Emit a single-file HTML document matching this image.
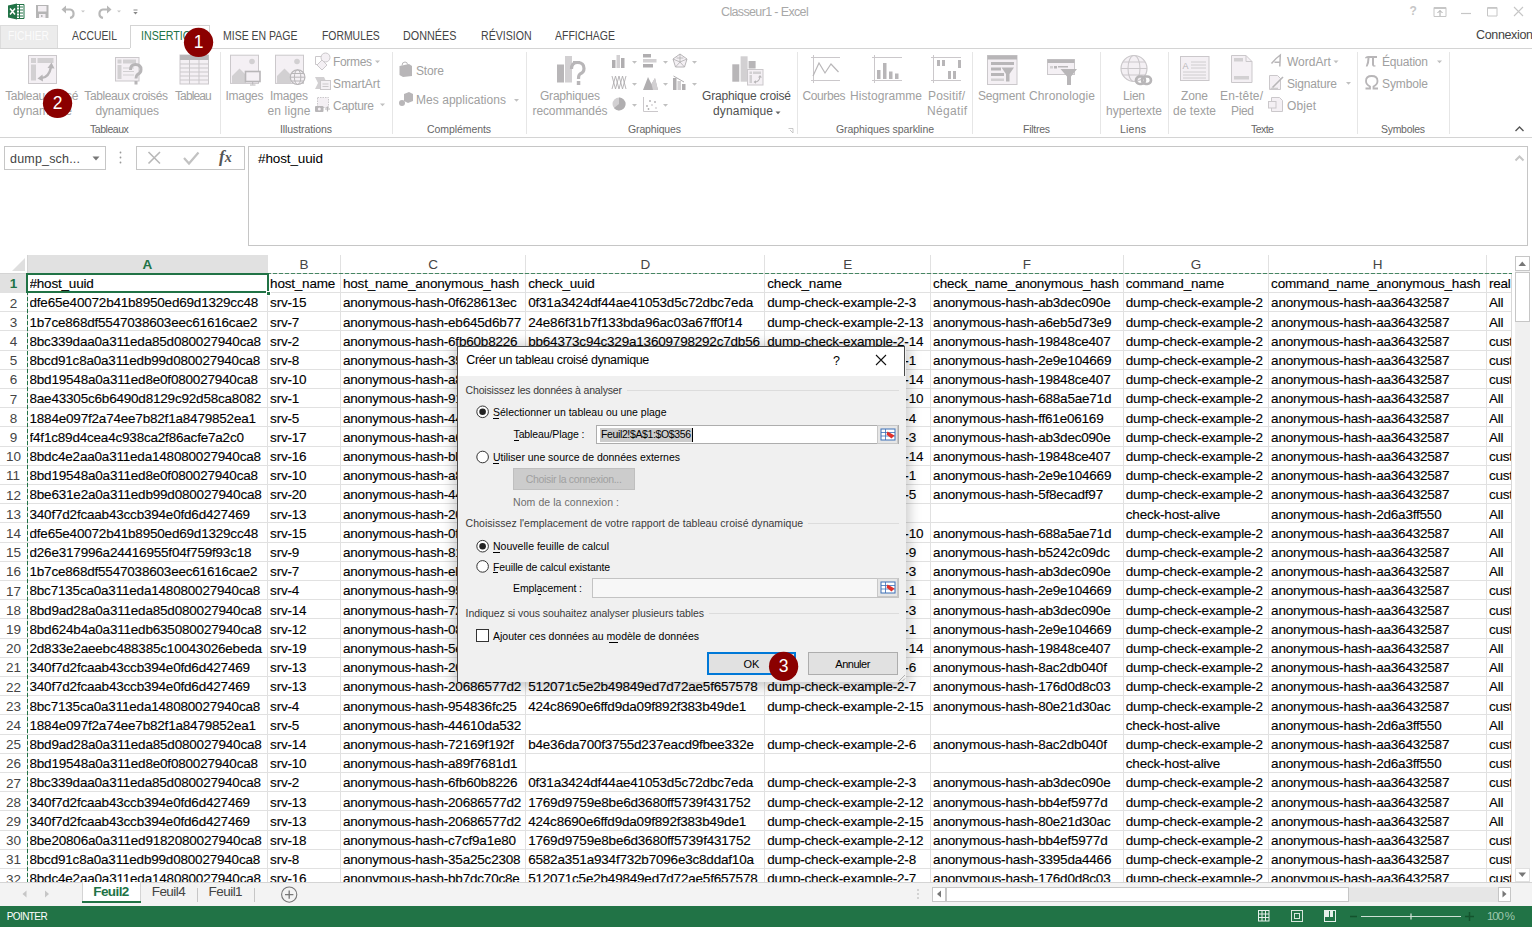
<!DOCTYPE html><html><head><meta charset="utf-8"><style>
*{margin:0;padding:0;box-sizing:border-box}
html,body{width:1532px;height:927px;overflow:hidden;background:#fff;font-family:"Liberation Sans",sans-serif}
.ab{position:absolute}
.t{position:absolute;white-space:nowrap}
.cell{position:absolute;white-space:nowrap;overflow:hidden;font-size:13.5px;color:#000;letter-spacing:-0.2px;line-height:19px;padding-top:0.8px;-webkit-text-stroke:0.12px #000}
svg{position:absolute;left:0;top:0}
</style></head><body>

<div class="t" style="left:721.00px;top:4.17px;font-size:12.5px;line-height:16px;color:#a8a8a8;letter-spacing:-0.641px">Classeur1 - Excel</div>
<svg width="1532" height="48"><path d="M15 4.5 L24 4.5 L24 18.5 L15 18.5Z" fill="#fff" stroke="#217346" stroke-width="1"/><path d="M16.5 7 H23 M16.5 10 H23 M16.5 13 H23 M16.5 16 H23 M19.5 5 V18" stroke="#217346" stroke-width="1"/><path d="M8 5.5 L17 3.5 L17 19.5 L8 17.5Z" fill="#217346"/><path d="M10 8.5 L15 14.5 M15 8.5 L10 14.5" stroke="#fff" stroke-width="1.5"/><path d="M36 5 H48.5 V18 H36Z" fill="#b5b5b5"/><rect x="38" y="6" width="8.5" height="5.5" fill="#f3eff3"/><rect x="39" y="14" width="6.5" height="4" fill="#f3eff3"/><rect x="41" y="15" width="1.5" height="2" fill="#b5b5b5"/><path d="M64 9.5 H70 A4.2 4.2 0 0 1 70 17.8" fill="none" stroke="#b8b8b8" stroke-width="2.2"/><path d="M61.5 9.5 L66 5.5 L66 13.5Z" fill="#b8b8b8"/><path d="M81 10.5 H85 L83 12.5Z" fill="#c6c6c6"/><path d="M109 9.5 H103 A4.2 4.2 0 0 0 103 17.8" fill="none" stroke="#b8b8b8" stroke-width="2.2"/><path d="M111.5 9.5 L107 5.5 L107 13.5Z" fill="#b8b8b8"/><path d="M117 10.5 H121 L119 12.5Z" fill="#c6c6c6"/><path d="M133.5 10 H137.5" stroke="#888" stroke-width="1"/><path d="M133.3 12 H137.7 L135.5 14.5Z" fill="#888"/><path d="M1434 7.5 H1446 V16.5 H1434Z M1434 8.5 H1446" fill="none" stroke="#c6c6c6" stroke-width="1"/><path d="M1440 16 V10.5 M1437.5 13 L1440 10.5 L1442.5 13" stroke="#aaa" stroke-width="1" fill="none"/><path d="M1461 13.5 H1471" stroke="#c6c6c6" stroke-width="1.2"/><path d="M1487.5 7.5 H1497 V16 H1487.5Z" fill="none" stroke="#c6c6c6" stroke-width="1"/><path d="M1487.5 8.3 H1497" stroke="#c6c6c6" stroke-width="1"/><path d="M1514 7 L1523 16 M1523 7 L1514 16" stroke="#c6c6c6" stroke-width="1.1"/></svg>
<div class="t" style="left:1409.50px;top:4.34px;font-size:12px;line-height:15px;color:#c6c6c6;font-weight:bold">?</div>
<div class="ab" style="left:0.00px;top:24.50px;width:57.50px;height:23.50px;background:#ececec;border:1px solid #dcdcdc;border-bottom:none"></div>
<div class="t" style="left:8.00px;top:28.37px;font-size:12.5px;line-height:16px;color:#fbfbfb;transform:scaleX(0.8200);transform-origin:0 0">FICHIER</div>
<div class="t" style="left:72.00px;top:28.37px;font-size:12.5px;line-height:16px;color:#444;transform:scaleX(0.8306);transform-origin:0 0">ACCUEIL</div>
<div class="ab" style="left:130.40px;top:24.60px;width:79.40px;height:23.90px;background:#fff;border:1px solid #d4d4d4;border-bottom:none"></div>
<div class="t" style="left:141.00px;top:28.37px;font-size:12.5px;line-height:16px;color:#217346;transform:scaleX(0.8522);transform-origin:0 0">INSERTION</div>
<div class="t" style="left:222.50px;top:28.37px;font-size:12.5px;line-height:16px;color:#444;transform:scaleX(0.8403);transform-origin:0 0">MISE EN PAGE</div>
<div class="t" style="left:321.50px;top:28.37px;font-size:12.5px;line-height:16px;color:#444;transform:scaleX(0.8322);transform-origin:0 0">FORMULES</div>
<div class="t" style="left:403.40px;top:28.37px;font-size:12.5px;line-height:16px;color:#444;transform:scaleX(0.8638);transform-origin:0 0">DONNÉES</div>
<div class="t" style="left:480.50px;top:28.37px;font-size:12.5px;line-height:16px;color:#444;transform:scaleX(0.8487);transform-origin:0 0">RÉVISION</div>
<div class="t" style="left:555.30px;top:28.37px;font-size:12.5px;line-height:16px;color:#444;transform:scaleX(0.8374);transform-origin:0 0">AFFICHAGE</div>
<div class="t" style="left:1476.00px;top:26.67px;font-size:12.5px;line-height:16px;color:#444;letter-spacing:-0.346px">Connexion</div>
<div class="ab" style="left:0.00px;top:47.50px;width:130.40px;height:1.00px;background:#d4d4d4"></div>
<div class="ab" style="left:209.80px;top:47.50px;width:1322.20px;height:1.00px;background:#d4d4d4"></div>
<div class="ab" style="left:0.00px;top:137.00px;width:1532.00px;height:1.00px;background:#d4d4d4"></div>
<div class="t" style="left:5.15px;top:88.74px;font-size:12px;line-height:15px;color:#a0a0a0;letter-spacing:-0.324px">Tableau croisé</div>
<div class="t" style="left:12.90px;top:104.44px;font-size:12px;line-height:15px;color:#a0a0a0;letter-spacing:0.037px">dynamique</div>
<div class="t" style="left:84.30px;top:88.74px;font-size:12px;line-height:15px;color:#a0a0a0;letter-spacing:-0.381px">Tableaux croisés</div>
<div class="t" style="left:95.45px;top:104.44px;font-size:12px;line-height:15px;color:#a0a0a0;letter-spacing:-0.134px">dynamiques</div>
<div class="t" style="left:175.00px;top:88.74px;font-size:12px;line-height:15px;color:#a0a0a0;letter-spacing:-0.894px">Tableau</div>
<div class="t" style="left:90.00px;top:122.56px;font-size:10.5px;line-height:13px;color:#666;letter-spacing:-0.456px">Tableaux</div>
<div class="t" style="left:225.50px;top:88.74px;font-size:12px;line-height:15px;color:#a0a0a0;letter-spacing:-0.270px">Images</div>
<div class="t" style="left:270.00px;top:88.74px;font-size:12px;line-height:15px;color:#a0a0a0;letter-spacing:-0.270px">Images</div>
<div class="t" style="left:267.50px;top:104.44px;font-size:12px;line-height:15px;color:#a0a0a0;letter-spacing:0.138px">en ligne</div>
<div class="t" style="left:333.00px;top:55.04px;font-size:12px;line-height:15px;color:#a0a0a0;letter-spacing:-0.334px">Formes</div>
<div class="t" style="left:333.00px;top:77.04px;font-size:12px;line-height:15px;color:#a0a0a0;letter-spacing:-0.048px">SmartArt</div>
<div class="t" style="left:333.00px;top:98.54px;font-size:12px;line-height:15px;color:#a0a0a0;letter-spacing:-0.282px">Capture</div>
<div class="t" style="left:280.00px;top:122.56px;font-size:10.5px;line-height:13px;color:#666;letter-spacing:-0.092px">Illustrations</div>
<div class="t" style="left:416.00px;top:64.04px;font-size:12px;line-height:15px;color:#a0a0a0;letter-spacing:-0.170px">Store</div>
<div class="t" style="left:416.00px;top:93.04px;font-size:12px;line-height:15px;color:#a0a0a0;letter-spacing:0.041px">Mes applications</div>
<div class="t" style="left:427.00px;top:122.56px;font-size:10.5px;line-height:13px;color:#666;letter-spacing:-0.077px">Compléments</div>
<div class="t" style="left:540.00px;top:88.74px;font-size:12px;line-height:15px;color:#a0a0a0;letter-spacing:-0.227px">Graphiques</div>
<div class="t" style="left:532.50px;top:104.44px;font-size:12px;line-height:15px;color:#a0a0a0;letter-spacing:-0.103px">recommandés</div>
<div class="t" style="left:702.00px;top:88.74px;font-size:12px;line-height:15px;color:#505050;letter-spacing:-0.159px">Graphique croisé</div>
<div class="t" style="left:713.00px;top:104.44px;font-size:12px;line-height:15px;color:#505050;letter-spacing:0.162px">dynamique</div>
<div class="t" style="left:628.00px;top:122.56px;font-size:10.5px;line-height:13px;color:#666;letter-spacing:-0.143px">Graphiques</div>
<div class="t" style="left:802.50px;top:88.74px;font-size:12px;line-height:15px;color:#a0a0a0;letter-spacing:-0.393px">Courbes</div>
<div class="t" style="left:850.00px;top:88.74px;font-size:12px;line-height:15px;color:#a0a0a0;letter-spacing:0.065px">Histogramme</div>
<div class="t" style="left:928.00px;top:88.74px;font-size:12px;line-height:15px;color:#a0a0a0;letter-spacing:0.141px">Positif/</div>
<div class="t" style="left:927.00px;top:104.44px;font-size:12px;line-height:15px;color:#a0a0a0;letter-spacing:0.330px">Négatif</div>
<div class="t" style="left:836.00px;top:122.56px;font-size:10.5px;line-height:13px;color:#666;letter-spacing:-0.064px">Graphiques sparkline</div>
<div class="t" style="left:978.00px;top:88.74px;font-size:12px;line-height:15px;color:#a0a0a0;letter-spacing:-0.172px">Segment</div>
<div class="t" style="left:1029.00px;top:88.74px;font-size:12px;line-height:15px;color:#a0a0a0;letter-spacing:0.129px">Chronologie</div>
<div class="t" style="left:1023.00px;top:122.56px;font-size:10.5px;line-height:13px;color:#666;letter-spacing:-0.264px">Filtres</div>
<div class="t" style="left:1123.00px;top:88.74px;font-size:12px;line-height:15px;color:#a0a0a0;letter-spacing:-0.229px">Lien</div>
<div class="t" style="left:1106.00px;top:104.44px;font-size:12px;line-height:15px;color:#a0a0a0;letter-spacing:-0.004px">hypertexte</div>
<div class="t" style="left:1120.00px;top:122.56px;font-size:10.5px;line-height:13px;color:#666;letter-spacing:0.225px">Liens</div>
<div class="t" style="left:1181.00px;top:88.74px;font-size:12px;line-height:15px;color:#a0a0a0;letter-spacing:-0.117px">Zone</div>
<div class="t" style="left:1173.00px;top:104.44px;font-size:12px;line-height:15px;color:#a0a0a0;letter-spacing:0.043px">de texte</div>
<div class="t" style="left:1220.00px;top:88.74px;font-size:12px;line-height:15px;color:#a0a0a0;letter-spacing:0.140px">En-tête/</div>
<div class="t" style="left:1231.00px;top:104.44px;font-size:12px;line-height:15px;color:#a0a0a0;letter-spacing:-0.339px">Pied</div>
<div class="t" style="left:1287.00px;top:55.04px;font-size:12px;line-height:15px;color:#a0a0a0;letter-spacing:-0.001px">WordArt</div>
<div class="t" style="left:1287.00px;top:77.04px;font-size:12px;line-height:15px;color:#a0a0a0;letter-spacing:-0.171px">Signature</div>
<div class="t" style="left:1287.00px;top:98.54px;font-size:12px;line-height:15px;color:#a0a0a0;letter-spacing:0.080px">Objet</div>
<div class="t" style="left:1251.00px;top:122.56px;font-size:10.5px;line-height:13px;color:#666;letter-spacing:-0.565px">Texte</div>
<div class="t" style="left:1382.00px;top:55.04px;font-size:12px;line-height:15px;color:#a0a0a0;letter-spacing:-0.196px">Équation</div>
<div class="t" style="left:1382.00px;top:77.04px;font-size:12px;line-height:15px;color:#a0a0a0;letter-spacing:-0.115px">Symbole</div>
<div class="t" style="left:1381.00px;top:122.56px;font-size:10.5px;line-height:13px;color:#666;letter-spacing:-0.300px">Symboles</div>
<div class="ab" style="left:219.70px;top:52.30px;width:1.00px;height:81.40px;background:#e6e6e6"></div>
<div class="ab" style="left:391.50px;top:52.30px;width:1.00px;height:81.40px;background:#e6e6e6"></div>
<div class="ab" style="left:526.00px;top:52.30px;width:1.00px;height:81.40px;background:#e6e6e6"></div>
<div class="ab" style="left:797.00px;top:52.30px;width:1.00px;height:81.40px;background:#e6e6e6"></div>
<div class="ab" style="left:971.90px;top:52.30px;width:1.00px;height:81.40px;background:#e6e6e6"></div>
<div class="ab" style="left:1100.20px;top:52.30px;width:1.00px;height:81.40px;background:#e6e6e6"></div>
<div class="ab" style="left:1167.50px;top:52.30px;width:1.00px;height:81.40px;background:#e6e6e6"></div>
<div class="ab" style="left:1357.00px;top:52.30px;width:1.00px;height:81.40px;background:#e6e6e6"></div>
<div class="ab" style="left:1449.10px;top:52.30px;width:1.00px;height:81.40px;background:#e6e6e6"></div>
<svg width="1532" height="140"><rect x="28.5" y="55.5" width="28" height="28" fill="#f4f0f4" stroke="#cbc8cb"/><rect x="31" y="58" width="5" height="5" fill="#d2d0d2"/><rect x="37.5" y="58" width="16" height="5" fill="#d2d0d2"/><rect x="31" y="64.5" width="5" height="16" fill="#d2d0d2"/><path d="M41 78 Q49 78 51 67" fill="none" stroke="#b8b6b8" stroke-width="2.4"/><path d="M47.5 68 L51.5 62.5 L54.5 68.5Z" fill="#b8b6b8"/><path d="M42.5 74.5 L37.5 78.5 L43 81.5Z" fill="#b8b6b8"/><rect x="115.5" y="57.5" width="23.5" height="23.5" fill="#f4f0f4" stroke="#cbc8cb"/><rect x="117.5" y="59.5" width="4" height="4" fill="#d2d0d2"/><rect x="123" y="59.5" width="13" height="4" fill="#d2d0d2"/><rect x="117.5" y="65" width="4" height="14" fill="#d2d0d2"/><path d="M123 68 H134 M123 71.5 H134 M123 75 H134" stroke="#d2d0d2" stroke-width="1"/><path d="M130.5 70 Q130.5 64.5 135.5 64.5 Q141 64.5 141 69.5 Q141 73 137.5 74.5 Q136 75.5 136 78.5" fill="none" stroke="#b8b6b8" stroke-width="3"/><rect x="134.5" y="81" width="3" height="3.5" fill="#b8b6b8"/><rect x="180" y="55" width="28.5" height="29" fill="#f4f0f4" stroke="#cbc8cb"/><rect x="180" y="55" width="28.5" height="5" fill="#b8b6b8"/><path d="M189.5 60 V84 M199 60 V84 M180 64 H208.5 M180 68 H208.5 M180 72 H208.5 M180 76 H208.5 M180 80 H208.5" stroke="#cbc8cb" stroke-width="1"/><rect x="230.5" y="55.2" width="28" height="28.2" fill="#f4f0f4" stroke="#cbc8cb"/><circle cx="252" cy="61.5" r="2.8" fill="#d2d0d2"/><path d="M232 83 V76 L239.5 68.5 L246 75 V83Z" fill="#d2d0d2"/><rect x="245.5" y="71.5" width="14.5" height="10" fill="#f4f0f4" stroke="#b8b6b8" stroke-width="1.6"/><path d="M252.7 82 V84.5 M250 85 H255.5" stroke="#b8b6b8" stroke-width="1"/><rect x="275.5" y="55.2" width="28" height="28.2" fill="#f4f0f4" stroke="#cbc8cb"/><circle cx="297" cy="61.5" r="2.8" fill="#d2d0d2"/><path d="M277 83 V76 L284.5 68.5 L291 75 V83Z" fill="#d2d0d2"/><circle cx="297.6" cy="77.2" r="7.3" fill="#f4f0f4" stroke="#b8b6b8" stroke-width="1.2"/><ellipse cx="297.6" cy="77.2" rx="3.2" ry="7.3" fill="none" stroke="#b8b6b8" stroke-width="1"/><path d="M290.3 77.2 H304.9 M291.3 73.5 H303.9 M291.3 81 H303.9" stroke="#b8b6b8" stroke-width="1"/><path d="M315.5 56.5 H324 V64.5 H315.5Z" fill="none" stroke="#cbc8cb"/><circle cx="325.5" cy="57.5" r="4.5" fill="#f4f0f4" stroke="#cbc8cb"/><path d="M322 60 L327 65 L322 70 L317 65Z" fill="#f4f0f4" stroke="#cbc8cb"/><path d="M375 60.5 H380 L377.5 63.3Z" fill="#c0c0c0"/><path d="M315 77 H324 L327 83 L324 89 H315 L318 83Z" fill="#d2d0d2"/><rect x="320.5" y="80.5" width="10" height="9" fill="#f4f0f4" stroke="#cbc8cb"/><path d="M322.5 84 H328.5 M322.5 86.5 H328.5" stroke="#cbc8cb"/><rect x="317.5" y="97.5" width="11" height="10" fill="#f4f0f4" stroke="#cbc8cb" stroke-dasharray="1.5 1"/><rect x="315" y="106" width="8.5" height="6" rx="1" fill="#b8b6b8"/><circle cx="319.3" cy="109" r="1.5" fill="#f4f0f4"/><path d="M325 109 H330 M327.5 106.5 V111.5" stroke="#b8b6b8" stroke-width="1.2"/><path d="M380 103.5 H385 L382.5 106.3Z" fill="#c0c0c0"/><path d="M399.5 66 L409 64 L412 66 L412 76 L403 77 L399.5 75Z" fill="#b8b6b8"/><path d="M402 65.5 Q402 62 405 62 Q407.5 62 407.5 64.5" fill="none" stroke="#b8b6b8" stroke-width="1"/><path d="M404 94 L409 92 L413 94 L413 101 L408 103 L404 101Z" fill="#b8b6b8"/><circle cx="402" cy="103" r="3" fill="#b8b6b8"/><path d="M514 99 H519 L516.5 101.8Z" fill="#c0c0c0"/><rect x="557" y="64.5" width="7" height="18" fill="#b8b6b8"/><rect x="565" y="56" width="7" height="26.5" fill="#d2d0d2"/><rect x="573" y="61" width="7" height="3" fill="#b8b6b8"/><path d="M571.5 69 Q571.5 62.5 577.5 62.5 Q584 62.5 584 68.5 Q584 72.5 580 74 Q578.5 75 578.5 79" fill="none" stroke="#b8b6b8" stroke-width="3.2"/><rect x="576.8" y="81" width="3.5" height="4" fill="#b8b6b8"/><rect x="612" y="60" width="3.5" height="8" fill="#b0aeb0"/><rect x="616.5" y="55" width="3.5" height="13" fill="#d2d0d2"/><rect x="621" y="58" width="3.5" height="10" fill="#b0aeb0"/><path d="M632 61 H637 L634.5 63.8Z" fill="#c0c0c0"/><rect x="643" y="54" width="8" height="3.5" fill="#b0aeb0"/><rect x="643" y="59" width="13.5" height="3.5" fill="#d2d0d2"/><rect x="643" y="64" width="10" height="3.5" fill="#b0aeb0"/><path d="M663 61 H668 L665.5 63.8Z" fill="#c0c0c0"/><path d="M680 54 L687 59 L684.5 67 L675.5 67 L673 59Z" fill="#f4f0f4" stroke="#b0aeb0" stroke-width="0.9"/><path d="M680 54 V62 L687 59 M680 62 L684.5 67 M680 62 L675.5 67 M680 62 L673 59 M676.5 58 L683.5 58" stroke="#b0aeb0" stroke-width="0.8" fill="none"/><path d="M692 61 H697 L694.5 63.8Z" fill="#c0c0c0"/><path d="M612 76 L615.5 89 L619 76 L622.5 89 L626 76 M612 89 L615.5 76 L619 89 L622.5 76 L626 89" fill="none" stroke="#b0aeb0" stroke-width="0.9"/><path d="M632 83 H637 L634.5 85.8Z" fill="#c0c0c0"/><path d="M643 90 L648 77 L651.5 84 L655 78 L658 90Z" fill="#b0aeb0"/><path d="M651.5 84 L655 78 L658 90 L653 90Z" fill="#d2d0d2"/><path d="M663 83 H668 L665.5 85.8Z" fill="#c0c0c0"/><rect x="673" y="78" width="3.5" height="12" fill="#b0aeb0"/><rect x="677.5" y="81" width="3.5" height="9" fill="#d2d0d2"/><rect x="682" y="84" width="3.5" height="6" fill="#b0aeb0"/><path d="M673.5 76 L684 82" stroke="#b0aeb0" stroke-width="1"/><path d="M692 83 H697 L694.5 85.8Z" fill="#c0c0c0"/><circle cx="619" cy="104" r="6.5" fill="#d2d0d2"/><path d="M619 104 V97.5 A6.5 6.5 0 0 1 625.5 104 A6.5 6.5 0 0 1 614 108 Z" fill="#b0aeb0"/><path d="M632 104 H637 L634.5 106.8Z" fill="#c0c0c0"/><path d="M643.5 97 V111.5 H658" fill="none" stroke="#cbc8cb" stroke-width="1"/><circle cx="647" cy="106" r="0.9" fill="#b0aeb0"/><circle cx="650" cy="101" r="0.9" fill="#b0aeb0"/><circle cx="652" cy="105" r="0.9" fill="#d2d0d2"/><circle cx="655" cy="102" r="0.9" fill="#b0aeb0"/><circle cx="656" cy="108" r="0.9" fill="#d2d0d2"/><circle cx="648.5" cy="109" r="0.9" fill="#b0aeb0"/><path d="M663 104 H668 L665.5 106.8Z" fill="#c0c0c0"/><rect x="732.3" y="64.3" width="7" height="17.4" fill="#b8b6b8"/><rect x="740.6" y="56.3" width="7" height="25.4" fill="#d2d0d2"/><rect x="748.6" y="61" width="7" height="7.5" fill="#b8b6b8"/><rect x="747.5" y="69.5" width="15.5" height="15.5" fill="#f4f0f4" stroke="#cbc8cb"/><rect x="749.5" y="71.5" width="2.5" height="2.5" fill="#d2d0d2"/><rect x="753" y="71.5" width="8" height="2.5" fill="#d2d0d2"/><rect x="749.5" y="75" width="2.5" height="8" fill="#d2d0d2"/><path d="M754.5 82 Q759.5 82 760 76.5" fill="none" stroke="#b8b6b8" stroke-width="1.1"/><path d="M758 77.5 L760 75 L762 77.5Z M756 80.3 L753.5 82 L756 83.7Z" fill="#b8b6b8"/><path d="M775.5 111.5 H780.5 L778.0 114.3Z" fill="#666"/><path d="M788.5 128.5 H793 V133 M790 130 L793 133" fill="none" stroke="#bbb" stroke-width="0.8"/><path d="M811 57.5 H840 M811 80.5 H840 M813.5 55 V83" stroke="#cbc8cb" stroke-width="1"/><path d="M813 76 L819 63 L825 73 L831 64 L838.5 72" fill="none" stroke="#b8b6b8" stroke-width="1.2"/><path d="M872 57.5 H902 M872 80.5 H902 M874.5 55 V83" stroke="#cbc8cb" stroke-width="1"/><rect x="877" y="70" width="3.5" height="9" fill="#b8b6b8"/><rect x="883" y="63" width="3.5" height="16" fill="#b8b6b8"/><rect x="889" y="71.5" width="3.5" height="7.5" fill="#b8b6b8"/><rect x="895" y="73.5" width="3.5" height="5.5" fill="#b8b6b8"/><path d="M931 57.5 H961 M931 80.5 H961 M933.5 55 V83" stroke="#cbc8cb" stroke-width="1"/><rect x="937" y="60" width="3" height="6" fill="#b8b6b8"/><rect x="942" y="60" width="3" height="6" fill="#b8b6b8"/><rect x="948" y="71" width="3" height="8" fill="#b8b6b8"/><rect x="953" y="71" width="3" height="8" fill="#b8b6b8"/><rect x="958" y="60" width="3" height="8" fill="#b8b6b8"/><rect x="987.5" y="55.5" width="29.5" height="29" fill="#f4f0f4" stroke="#cbc8cb"/><rect x="987.5" y="55.5" width="29.5" height="4" fill="#b8b6b8"/><rect x="991" y="62" width="23" height="3" fill="#b8b6b8"/><rect x="991" y="67.5" width="10" height="3" fill="#b8b6b8"/><rect x="991" y="73" width="13" height="3" fill="#b8b6b8"/><rect x="991" y="78.5" width="13" height="2.5" fill="#d2d0d2"/><path d="M1001.5 67.5 H1014 L1009.5 74 V81.5 H1006 V74Z" fill="#b8b6b8"/><rect x="1047.5" y="59.5" width="27" height="15" fill="#f4f0f4" stroke="#cbc8cb"/><rect x="1047.5" y="59.5" width="27" height="3.5" fill="#b8b6b8"/><rect x="1050" y="66" width="3" height="2.5" fill="#d2d0d2"/><rect x="1054" y="66" width="3" height="2.5" fill="#b8b6b8"/><rect x="1058" y="66" width="10" height="1.5" fill="#b8b6b8"/><path d="M1060.5 69 H1077 L1071 76.5 V85 H1067 V76.5Z" fill="#b8b6b8"/><circle cx="1134" cy="68.5" r="13" fill="#f4f0f4" stroke="#cbc8cb" stroke-width="1.2"/><ellipse cx="1134" cy="68.5" rx="6" ry="13" fill="none" stroke="#cbc8cb" stroke-width="1.1"/><path d="M1121 68.5 H1147 M1123 62 H1145 M1123 75 H1145" stroke="#cbc8cb" stroke-width="1.1"/><rect x="1136" y="76.5" width="9" height="7.5" rx="3.7" fill="none" stroke="#b8b6b8" stroke-width="2.6"/><rect x="1142" y="76.5" width="9" height="7.5" rx="3.7" fill="none" stroke="#b8b6b8" stroke-width="2.6"/><rect x="1180.5" y="56.5" width="28.5" height="24" fill="#f4f0f4" stroke="#cbc8cb"/><text x="1182.5" y="69" font-family="Liberation Sans" font-size="9" fill="#b8b6b8">A</text><path d="M1191 62 H1206 M1191 65 H1206 M1191 68 H1206 M1183 72 H1206 M1183 75 H1206 M1183 78 H1206" stroke="#cbc8cb" stroke-width="0.9"/><path d="M1231.5 55.5 H1246 L1252 61.5 V82.5 H1231.5Z" fill="#f4f0f4" stroke="#cbc8cb"/><path d="M1246 55.5 V61.5 H1252" fill="none" stroke="#cbc8cb"/><rect x="1234" y="58" width="9" height="3.5" fill="#d2d0d2"/><rect x="1234" y="76" width="15" height="3.5" fill="#d2d0d2"/><path d="M1271.5 63.5 Q1276 58 1280.3 55 L1279.8 66.5 M1274.5 62.3 H1279.8" fill="none" stroke="#b8b6b8" stroke-width="1.5"/><path d="M1333.5 60.5 H1338.5 L1336.0 63.3Z" fill="#c0c0c0"/><path d="M1269.5 75.5 H1277.5 L1280.5 78.5 V89.5 H1269.5Z" fill="#f4f0f4" stroke="#cbc8cb"/><path d="M1272.5 87.5 L1283 77" stroke="#b8b6b8" stroke-width="1.6"/><path d="M1270.5 88.3 H1278" stroke="#b8b6b8" stroke-width="0.8"/><path d="M1346 82 H1351 L1348.5 84.8Z" fill="#c0c0c0"/><path d="M1271.5 97.5 H1279.5 L1282.5 100.5 V111.5 H1271.5Z" fill="#f4f0f4" stroke="#cbc8cb"/><rect x="1268.5" y="101.5" width="7.5" height="6.5" fill="#f4f0f4" stroke="#cbc8cb"/><path d="M1365 57.5 Q1366 56 1368 56 H1377 V58 H1374 V64.5 Q1374 65.8 1375.5 65.5 L1375.8 66.3 Q1372 67.5 1372 64.5 V58 H1369.5 Q1369.5 63 1367.5 66.5 H1365.8 Q1367.5 62 1367.5 58 Q1366 58 1365.6 58.6Z" fill="#b8b6b8"/><path d="M1437 60.5 H1442 L1439.5 63.3Z" fill="#c0c0c0"/><path d="M1365.5 88.5 H1370 V86.5 Q1366 84.5 1366 81 Q1366 76 1371.7 76 Q1377.5 76 1377.5 81 Q1377.5 84.5 1373.5 86.5 V88.5 H1378" fill="none" stroke="#b8b6b8" stroke-width="1.8"/><path d="M1515.5 131 L1519.5 127 L1523.5 131" fill="none" stroke="#555" stroke-width="1.4"/></svg>
<div class="ab" style="left:4.30px;top:146.40px;width:101.40px;height:23.30px;background:#fff;border:1px solid #c6c6c6"></div>
<div class="t" style="left:10.00px;top:150.67px;font-size:12.5px;line-height:16px;color:#444;letter-spacing:0.191px">dump_sch...</div>
<svg width="1532" height="260" style="left:0;top:0"><path d="M92.5 156.5 L99.5 156.5 L96 160.5Z" fill="#777"/><circle cx="120.5" cy="152.5" r="0.9" fill="#999"/><circle cx="120.5" cy="157.5" r="0.9" fill="#999"/><circle cx="120.5" cy="162.5" r="0.9" fill="#999"/><path d="M148.5 152 L160 163.5 M160 152 L148.5 163.5" stroke="#b8b8b8" stroke-width="1.6"/><path d="M184 158 L189 163.5 L198.5 152.5" stroke="#c2c2c2" stroke-width="2.2" fill="none"/><path d="M1515.5 160.5 L1519.5 156.5 L1523.5 160.5" stroke="#c6c6c6" stroke-width="2" fill="none"/></svg>
<div class="ab" style="left:136.00px;top:146.40px;width:108.70px;height:23.30px;border:1px solid #c6c6c6"></div>
<div class="t" style="left:219px;top:146px;font-family:'Liberation Serif',serif;font-style:italic;font-weight:bold;font-size:17px;color:#555;line-height:22px">f<span style="font-size:14px">x</span></div>
<div class="ab" style="left:248.40px;top:146.40px;width:1279.30px;height:100.00px;border:1px solid #c6c6c6"></div>
<div class="t" style="left:258.00px;top:149.82px;font-size:13.5px;line-height:17px;color:#000;letter-spacing:-0.117px">#host_uuid</div>
<div class="ab" style="left:27.00px;top:255.00px;width:240.60px;height:18.50px;background:#e1e1e1"></div>
<div class="ab" style="left:0.00px;top:273.50px;width:27.00px;height:19.20px;background:#e1e1e1"></div>
<svg width="30" height="20" style="left:0;top:255px"><path d="M12 16 L25 3 L25 16Z" fill="#dfdfdf"/></svg>
<div class="ab" style="left:267.10px;top:255.00px;width:1.00px;height:627.30px;background:#e1e1e1"></div>
<div class="ab" style="left:340.00px;top:255.00px;width:1.00px;height:627.30px;background:#e1e1e1"></div>
<div class="ab" style="left:525.20px;top:255.00px;width:1.00px;height:627.30px;background:#e1e1e1"></div>
<div class="ab" style="left:764.30px;top:255.00px;width:1.00px;height:627.30px;background:#e1e1e1"></div>
<div class="ab" style="left:930.10px;top:255.00px;width:1.00px;height:627.30px;background:#e1e1e1"></div>
<div class="ab" style="left:1122.80px;top:255.00px;width:1.00px;height:627.30px;background:#e1e1e1"></div>
<div class="ab" style="left:1268.10px;top:255.00px;width:1.00px;height:627.30px;background:#e1e1e1"></div>
<div class="ab" style="left:1485.90px;top:255.00px;width:1.00px;height:627.30px;background:#e1e1e1"></div>
<div class="ab" style="left:26.50px;top:255.00px;width:1.00px;height:627.30px;background:#d4d4d4"></div>
<div class="ab" style="left:0.00px;top:272.80px;width:1511.60px;height:1.00px;background:#d4d4d4"></div>
<div class="t" style="left:142.43px;top:255.82px;font-size:13.5px;line-height:17px;color:#217346;font-weight:bold">A</div>
<div class="t" style="left:299.55px;top:255.82px;font-size:13.5px;line-height:17px;color:#444">B</div>
<div class="t" style="left:428.23px;top:255.82px;font-size:13.5px;line-height:17px;color:#444">C</div>
<div class="t" style="left:640.38px;top:255.82px;font-size:13.5px;line-height:17px;color:#444">D</div>
<div class="t" style="left:843.20px;top:255.82px;font-size:13.5px;line-height:17px;color:#444">E</div>
<div class="t" style="left:1022.83px;top:255.82px;font-size:13.5px;line-height:17px;color:#444">F</div>
<div class="t" style="left:1190.70px;top:255.82px;font-size:13.5px;line-height:17px;color:#444">G</div>
<div class="t" style="left:1372.63px;top:255.82px;font-size:13.5px;line-height:17px;color:#444">H</div>
<div class="ab" style="left:0.00px;top:292.00px;width:1511.60px;height:1.00px;background:#e1e1e1"></div>
<div class="t" style="left:9.75px;top:275.32px;font-size:13.5px;line-height:17px;color:#217346;font-weight:bold">1</div>
<div class="cell" style="left:29.5px;top:273.5px;width:237.6px">#host_uuid</div>
<div class="cell" style="left:270.1px;top:273.5px;width:69.9px">host_name</div>
<div class="cell" style="left:343.0px;top:273.5px;width:182.2px">host_name_anonymous_hash</div>
<div class="cell" style="left:528.2px;top:273.5px;width:236.1px">check_uuid</div>
<div class="cell" style="left:767.3px;top:273.5px;width:162.8px">check_name</div>
<div class="cell" style="left:933.1px;top:273.5px;width:189.7px">check_name_anonymous_hash</div>
<div class="cell" style="left:1125.8px;top:273.5px;width:142.3px">command_name</div>
<div class="cell" style="left:1271.1px;top:273.5px;width:214.8px">command_name_anonymous_hash</div>
<div class="cell" style="left:1488.9px;top:273.5px;width:22.2px">real</div>
<div class="ab" style="left:0.00px;top:311.20px;width:1511.60px;height:1.00px;background:#e1e1e1"></div>
<div class="t" style="left:9.75px;top:294.52px;font-size:13.5px;line-height:17px;color:#444">2</div>
<div class="cell" style="left:29.5px;top:292.7px;width:237.6px">dfe65e40072b41b8950ed69d1329cc48</div>
<div class="cell" style="left:270.1px;top:292.7px;width:69.9px">srv-15</div>
<div class="cell" style="left:343.0px;top:292.7px;width:182.2px">anonymous-hash-0f628613ec</div>
<div class="cell" style="left:528.2px;top:292.7px;width:236.1px">0f31a3424df44ae41053d5c72dbc7eda</div>
<div class="cell" style="left:767.3px;top:292.7px;width:162.8px">dump-check-example-2-3</div>
<div class="cell" style="left:933.1px;top:292.7px;width:189.7px">anonymous-hash-ab3dec090e</div>
<div class="cell" style="left:1125.8px;top:292.7px;width:142.3px">dump-check-example-2</div>
<div class="cell" style="left:1271.1px;top:292.7px;width:214.8px">anonymous-hash-aa36432587</div>
<div class="cell" style="left:1488.9px;top:292.7px;width:22.2px">All</div>
<div class="ab" style="left:0.00px;top:330.40px;width:1511.60px;height:1.00px;background:#e1e1e1"></div>
<div class="t" style="left:9.75px;top:313.72px;font-size:13.5px;line-height:17px;color:#444">3</div>
<div class="cell" style="left:29.5px;top:311.9px;width:237.6px">1b7ce868df5547038603eec61616cae2</div>
<div class="cell" style="left:270.1px;top:311.9px;width:69.9px">srv-7</div>
<div class="cell" style="left:343.0px;top:311.9px;width:182.2px">anonymous-hash-eb645d6b77</div>
<div class="cell" style="left:528.2px;top:311.9px;width:236.1px">24e86f31b7f133bda96ac03a67ff0f14</div>
<div class="cell" style="left:767.3px;top:311.9px;width:162.8px">dump-check-example-2-13</div>
<div class="cell" style="left:933.1px;top:311.9px;width:189.7px">anonymous-hash-a6eb5d73e9</div>
<div class="cell" style="left:1125.8px;top:311.9px;width:142.3px">dump-check-example-2</div>
<div class="cell" style="left:1271.1px;top:311.9px;width:214.8px">anonymous-hash-aa36432587</div>
<div class="cell" style="left:1488.9px;top:311.9px;width:22.2px">All</div>
<div class="ab" style="left:0.00px;top:349.60px;width:1511.60px;height:1.00px;background:#e1e1e1"></div>
<div class="t" style="left:9.75px;top:332.92px;font-size:13.5px;line-height:17px;color:#444">4</div>
<div class="cell" style="left:29.5px;top:331.1px;width:237.6px">8bc339daa0a311eda85d080027940ca8</div>
<div class="cell" style="left:270.1px;top:331.1px;width:69.9px">srv-2</div>
<div class="cell" style="left:343.0px;top:331.1px;width:182.2px">anonymous-hash-6fb60b8226</div>
<div class="cell" style="left:528.2px;top:331.1px;width:236.1px">bb64373c94c329a13609798292c7db56</div>
<div class="cell" style="left:767.3px;top:331.1px;width:162.8px">dump-check-example-2-14</div>
<div class="cell" style="left:933.1px;top:331.1px;width:189.7px">anonymous-hash-19848ce407</div>
<div class="cell" style="left:1125.8px;top:331.1px;width:142.3px">dump-check-example-2</div>
<div class="cell" style="left:1271.1px;top:331.1px;width:214.8px">anonymous-hash-aa36432587</div>
<div class="cell" style="left:1488.9px;top:331.1px;width:22.2px">cust</div>
<div class="ab" style="left:0.00px;top:368.80px;width:1511.60px;height:1.00px;background:#e1e1e1"></div>
<div class="t" style="left:9.75px;top:352.12px;font-size:13.5px;line-height:17px;color:#444">5</div>
<div class="cell" style="left:29.5px;top:350.3px;width:237.6px">8bcd91c8a0a311edb99d080027940ca8</div>
<div class="cell" style="left:270.1px;top:350.3px;width:69.9px">srv-8</div>
<div class="cell" style="left:343.0px;top:350.3px;width:182.2px">anonymous-hash-35a25c2308</div>
<div class="cell" style="left:528.2px;top:350.3px;width:236.1px">6582a351a934f732b7096e3c8ddaf10a</div>
<div class="cell" style="left:767.3px;top:350.3px;width:162.8px">dump-check-example-2-1</div>
<div class="cell" style="left:933.1px;top:350.3px;width:189.7px">anonymous-hash-2e9e104669</div>
<div class="cell" style="left:1125.8px;top:350.3px;width:142.3px">dump-check-example-2</div>
<div class="cell" style="left:1271.1px;top:350.3px;width:214.8px">anonymous-hash-aa36432587</div>
<div class="cell" style="left:1488.9px;top:350.3px;width:22.2px">cust</div>
<div class="ab" style="left:0.00px;top:388.00px;width:1511.60px;height:1.00px;background:#e1e1e1"></div>
<div class="t" style="left:9.75px;top:371.32px;font-size:13.5px;line-height:17px;color:#444">6</div>
<div class="cell" style="left:29.5px;top:369.5px;width:237.6px">8bd19548a0a311ed8e0f080027940ca8</div>
<div class="cell" style="left:270.1px;top:369.5px;width:69.9px">srv-10</div>
<div class="cell" style="left:343.0px;top:369.5px;width:182.2px">anonymous-hash-a89f7681d1</div>
<div class="cell" style="left:528.2px;top:369.5px;width:236.1px">bb64373c94c329a13609798292c7db56</div>
<div class="cell" style="left:767.3px;top:369.5px;width:162.8px">dump-check-example-2-14</div>
<div class="cell" style="left:933.1px;top:369.5px;width:189.7px">anonymous-hash-19848ce407</div>
<div class="cell" style="left:1125.8px;top:369.5px;width:142.3px">dump-check-example-2</div>
<div class="cell" style="left:1271.1px;top:369.5px;width:214.8px">anonymous-hash-aa36432587</div>
<div class="cell" style="left:1488.9px;top:369.5px;width:22.2px">cust</div>
<div class="ab" style="left:0.00px;top:407.20px;width:1511.60px;height:1.00px;background:#e1e1e1"></div>
<div class="t" style="left:9.75px;top:390.52px;font-size:13.5px;line-height:17px;color:#444">7</div>
<div class="cell" style="left:29.5px;top:388.7px;width:237.6px">8ae43305c6b6490d8129c92d58ca8082</div>
<div class="cell" style="left:270.1px;top:388.7px;width:69.9px">srv-1</div>
<div class="cell" style="left:343.0px;top:388.7px;width:182.2px">anonymous-hash-91a5c2308e</div>
<div class="cell" style="left:528.2px;top:388.7px;width:236.1px">1769d9759e8be6d3680ff5739f431752</div>
<div class="cell" style="left:767.3px;top:388.7px;width:162.8px">dump-check-example-2-10</div>
<div class="cell" style="left:933.1px;top:388.7px;width:189.7px">anonymous-hash-688a5ae71d</div>
<div class="cell" style="left:1125.8px;top:388.7px;width:142.3px">dump-check-example-2</div>
<div class="cell" style="left:1271.1px;top:388.7px;width:214.8px">anonymous-hash-aa36432587</div>
<div class="cell" style="left:1488.9px;top:388.7px;width:22.2px">All</div>
<div class="ab" style="left:0.00px;top:426.40px;width:1511.60px;height:1.00px;background:#e1e1e1"></div>
<div class="t" style="left:9.75px;top:409.72px;font-size:13.5px;line-height:17px;color:#444">8</div>
<div class="cell" style="left:29.5px;top:407.9px;width:237.6px">1884e097f2a74ee7b82f1a8479852ea1</div>
<div class="cell" style="left:270.1px;top:407.9px;width:69.9px">srv-5</div>
<div class="cell" style="left:343.0px;top:407.9px;width:182.2px">anonymous-hash-44610da532</div>
<div class="cell" style="left:528.2px;top:407.9px;width:236.1px">424c8690e6ffd9da09f892f383b49de1</div>
<div class="cell" style="left:767.3px;top:407.9px;width:162.8px">dump-check-example-2-4</div>
<div class="cell" style="left:933.1px;top:407.9px;width:189.7px">anonymous-hash-ff61e06169</div>
<div class="cell" style="left:1125.8px;top:407.9px;width:142.3px">dump-check-example-2</div>
<div class="cell" style="left:1271.1px;top:407.9px;width:214.8px">anonymous-hash-aa36432587</div>
<div class="cell" style="left:1488.9px;top:407.9px;width:22.2px">All</div>
<div class="ab" style="left:0.00px;top:445.60px;width:1511.60px;height:1.00px;background:#e1e1e1"></div>
<div class="t" style="left:9.75px;top:428.92px;font-size:13.5px;line-height:17px;color:#444">9</div>
<div class="cell" style="left:29.5px;top:427.1px;width:237.6px">f4f1c89d4cea4c938ca2f86acfe7a2c0</div>
<div class="cell" style="left:270.1px;top:427.1px;width:69.9px">srv-17</div>
<div class="cell" style="left:343.0px;top:427.1px;width:182.2px">anonymous-hash-a6eb5d73e9</div>
<div class="cell" style="left:528.2px;top:427.1px;width:236.1px">0f31a3424df44ae41053d5c72dbc7eda</div>
<div class="cell" style="left:767.3px;top:427.1px;width:162.8px">dump-check-example-2-3</div>
<div class="cell" style="left:933.1px;top:427.1px;width:189.7px">anonymous-hash-ab3dec090e</div>
<div class="cell" style="left:1125.8px;top:427.1px;width:142.3px">dump-check-example-2</div>
<div class="cell" style="left:1271.1px;top:427.1px;width:214.8px">anonymous-hash-aa36432587</div>
<div class="cell" style="left:1488.9px;top:427.1px;width:22.2px">All</div>
<div class="ab" style="left:0.00px;top:464.80px;width:1511.60px;height:1.00px;background:#e1e1e1"></div>
<div class="t" style="left:5.99px;top:448.12px;font-size:13.5px;line-height:17px;color:#444">10</div>
<div class="cell" style="left:29.5px;top:446.3px;width:237.6px">8bdc4e2aa0a311eda148080027940ca8</div>
<div class="cell" style="left:270.1px;top:446.3px;width:69.9px">srv-16</div>
<div class="cell" style="left:343.0px;top:446.3px;width:182.2px">anonymous-hash-bb7dc70c8e</div>
<div class="cell" style="left:528.2px;top:446.3px;width:236.1px">bb64373c94c329a13609798292c7db56</div>
<div class="cell" style="left:767.3px;top:446.3px;width:162.8px">dump-check-example-2-14</div>
<div class="cell" style="left:933.1px;top:446.3px;width:189.7px">anonymous-hash-19848ce407</div>
<div class="cell" style="left:1125.8px;top:446.3px;width:142.3px">dump-check-example-2</div>
<div class="cell" style="left:1271.1px;top:446.3px;width:214.8px">anonymous-hash-aa36432587</div>
<div class="cell" style="left:1488.9px;top:446.3px;width:22.2px">cust</div>
<div class="ab" style="left:0.00px;top:484.00px;width:1511.60px;height:1.00px;background:#e1e1e1"></div>
<div class="t" style="left:5.99px;top:467.32px;font-size:13.5px;line-height:17px;color:#444">11</div>
<div class="cell" style="left:29.5px;top:465.5px;width:237.6px">8bd19548a0a311ed8e0f080027940ca8</div>
<div class="cell" style="left:270.1px;top:465.5px;width:69.9px">srv-10</div>
<div class="cell" style="left:343.0px;top:465.5px;width:182.2px">anonymous-hash-a89f7681d1</div>
<div class="cell" style="left:528.2px;top:465.5px;width:236.1px">6582a351a934f732b7096e3c8ddaf10a</div>
<div class="cell" style="left:767.3px;top:465.5px;width:162.8px">dump-check-example-2-1</div>
<div class="cell" style="left:933.1px;top:465.5px;width:189.7px">anonymous-hash-2e9e104669</div>
<div class="cell" style="left:1125.8px;top:465.5px;width:142.3px">dump-check-example-2</div>
<div class="cell" style="left:1271.1px;top:465.5px;width:214.8px">anonymous-hash-aa36432587</div>
<div class="cell" style="left:1488.9px;top:465.5px;width:22.2px">cust</div>
<div class="ab" style="left:0.00px;top:503.20px;width:1511.60px;height:1.00px;background:#e1e1e1"></div>
<div class="t" style="left:5.99px;top:486.52px;font-size:13.5px;line-height:17px;color:#444">12</div>
<div class="cell" style="left:29.5px;top:484.7px;width:237.6px">8be631e2a0a311edb99d080027940ca8</div>
<div class="cell" style="left:270.1px;top:484.7px;width:69.9px">srv-20</div>
<div class="cell" style="left:343.0px;top:484.7px;width:182.2px">anonymous-hash-44a5c2308e</div>
<div class="cell" style="left:528.2px;top:484.7px;width:236.1px">512071c5e2b49849ed7d72ae5f657578</div>
<div class="cell" style="left:767.3px;top:484.7px;width:162.8px">dump-check-example-2-5</div>
<div class="cell" style="left:933.1px;top:484.7px;width:189.7px">anonymous-hash-5f8ecadf97</div>
<div class="cell" style="left:1125.8px;top:484.7px;width:142.3px">dump-check-example-2</div>
<div class="cell" style="left:1271.1px;top:484.7px;width:214.8px">anonymous-hash-aa36432587</div>
<div class="cell" style="left:1488.9px;top:484.7px;width:22.2px">cust</div>
<div class="ab" style="left:0.00px;top:522.40px;width:1511.60px;height:1.00px;background:#e1e1e1"></div>
<div class="t" style="left:5.99px;top:505.72px;font-size:13.5px;line-height:17px;color:#444">13</div>
<div class="cell" style="left:29.5px;top:503.9px;width:237.6px">340f7d2fcaab43ccb394e0fd6d427469</div>
<div class="cell" style="left:270.1px;top:503.9px;width:69.9px">srv-13</div>
<div class="cell" style="left:343.0px;top:503.9px;width:182.2px">anonymous-hash-20686577d2</div>
<div class="cell" style="left:1125.8px;top:503.9px;width:142.3px">check-host-alive</div>
<div class="cell" style="left:1271.1px;top:503.9px;width:214.8px">anonymous-hash-2d6a3ff550</div>
<div class="cell" style="left:1488.9px;top:503.9px;width:22.2px">All</div>
<div class="ab" style="left:0.00px;top:541.60px;width:1511.60px;height:1.00px;background:#e1e1e1"></div>
<div class="t" style="left:5.99px;top:524.92px;font-size:13.5px;line-height:17px;color:#444">14</div>
<div class="cell" style="left:29.5px;top:523.1px;width:237.6px">dfe65e40072b41b8950ed69d1329cc48</div>
<div class="cell" style="left:270.1px;top:523.1px;width:69.9px">srv-15</div>
<div class="cell" style="left:343.0px;top:523.1px;width:182.2px">anonymous-hash-0f628613ec</div>
<div class="cell" style="left:528.2px;top:523.1px;width:236.1px">1769d9759e8be6d3680ff5739f431752</div>
<div class="cell" style="left:767.3px;top:523.1px;width:162.8px">dump-check-example-2-10</div>
<div class="cell" style="left:933.1px;top:523.1px;width:189.7px">anonymous-hash-688a5ae71d</div>
<div class="cell" style="left:1125.8px;top:523.1px;width:142.3px">dump-check-example-2</div>
<div class="cell" style="left:1271.1px;top:523.1px;width:214.8px">anonymous-hash-aa36432587</div>
<div class="cell" style="left:1488.9px;top:523.1px;width:22.2px">All</div>
<div class="ab" style="left:0.00px;top:560.80px;width:1511.60px;height:1.00px;background:#e1e1e1"></div>
<div class="t" style="left:5.99px;top:544.12px;font-size:13.5px;line-height:17px;color:#444">15</div>
<div class="cell" style="left:29.5px;top:542.3px;width:237.6px">d26e317996a24416955f04f759f93c18</div>
<div class="cell" style="left:270.1px;top:542.3px;width:69.9px">srv-9</div>
<div class="cell" style="left:343.0px;top:542.3px;width:182.2px">anonymous-hash-81c7cf9a1e</div>
<div class="cell" style="left:528.2px;top:542.3px;width:236.1px">424c8690e6ffd9da09f892f383b49de1</div>
<div class="cell" style="left:767.3px;top:542.3px;width:162.8px">dump-check-example-2-9</div>
<div class="cell" style="left:933.1px;top:542.3px;width:189.7px">anonymous-hash-b5242c09dc</div>
<div class="cell" style="left:1125.8px;top:542.3px;width:142.3px">dump-check-example-2</div>
<div class="cell" style="left:1271.1px;top:542.3px;width:214.8px">anonymous-hash-aa36432587</div>
<div class="cell" style="left:1488.9px;top:542.3px;width:22.2px">All</div>
<div class="ab" style="left:0.00px;top:580.00px;width:1511.60px;height:1.00px;background:#e1e1e1"></div>
<div class="t" style="left:5.99px;top:563.32px;font-size:13.5px;line-height:17px;color:#444">16</div>
<div class="cell" style="left:29.5px;top:561.5px;width:237.6px">1b7ce868df5547038603eec61616cae2</div>
<div class="cell" style="left:270.1px;top:561.5px;width:69.9px">srv-7</div>
<div class="cell" style="left:343.0px;top:561.5px;width:182.2px">anonymous-hash-eb645d6b77</div>
<div class="cell" style="left:528.2px;top:561.5px;width:236.1px">0f31a3424df44ae41053d5c72dbc7eda</div>
<div class="cell" style="left:767.3px;top:561.5px;width:162.8px">dump-check-example-2-3</div>
<div class="cell" style="left:933.1px;top:561.5px;width:189.7px">anonymous-hash-ab3dec090e</div>
<div class="cell" style="left:1125.8px;top:561.5px;width:142.3px">dump-check-example-2</div>
<div class="cell" style="left:1271.1px;top:561.5px;width:214.8px">anonymous-hash-aa36432587</div>
<div class="cell" style="left:1488.9px;top:561.5px;width:22.2px">All</div>
<div class="ab" style="left:0.00px;top:599.20px;width:1511.60px;height:1.00px;background:#e1e1e1"></div>
<div class="t" style="left:5.99px;top:582.52px;font-size:13.5px;line-height:17px;color:#444">17</div>
<div class="cell" style="left:29.5px;top:580.7px;width:237.6px">8bc7135ca0a311eda148080027940ca8</div>
<div class="cell" style="left:270.1px;top:580.7px;width:69.9px">srv-4</div>
<div class="cell" style="left:343.0px;top:580.7px;width:182.2px">anonymous-hash-954836fc25</div>
<div class="cell" style="left:528.2px;top:580.7px;width:236.1px">6582a351a934f732b7096e3c8ddaf10a</div>
<div class="cell" style="left:767.3px;top:580.7px;width:162.8px">dump-check-example-2-1</div>
<div class="cell" style="left:933.1px;top:580.7px;width:189.7px">anonymous-hash-2e9e104669</div>
<div class="cell" style="left:1125.8px;top:580.7px;width:142.3px">dump-check-example-2</div>
<div class="cell" style="left:1271.1px;top:580.7px;width:214.8px">anonymous-hash-aa36432587</div>
<div class="cell" style="left:1488.9px;top:580.7px;width:22.2px">cust</div>
<div class="ab" style="left:0.00px;top:618.40px;width:1511.60px;height:1.00px;background:#e1e1e1"></div>
<div class="t" style="left:5.99px;top:601.72px;font-size:13.5px;line-height:17px;color:#444">18</div>
<div class="cell" style="left:29.5px;top:599.9px;width:237.6px">8bd9ad28a0a311eda85d080027940ca8</div>
<div class="cell" style="left:270.1px;top:599.9px;width:69.9px">srv-14</div>
<div class="cell" style="left:343.0px;top:599.9px;width:182.2px">anonymous-hash-72169f192f</div>
<div class="cell" style="left:528.2px;top:599.9px;width:236.1px">0f31a3424df44ae41053d5c72dbc7eda</div>
<div class="cell" style="left:767.3px;top:599.9px;width:162.8px">dump-check-example-2-3</div>
<div class="cell" style="left:933.1px;top:599.9px;width:189.7px">anonymous-hash-ab3dec090e</div>
<div class="cell" style="left:1125.8px;top:599.9px;width:142.3px">dump-check-example-2</div>
<div class="cell" style="left:1271.1px;top:599.9px;width:214.8px">anonymous-hash-aa36432587</div>
<div class="cell" style="left:1488.9px;top:599.9px;width:22.2px">cust</div>
<div class="ab" style="left:0.00px;top:637.60px;width:1511.60px;height:1.00px;background:#e1e1e1"></div>
<div class="t" style="left:5.99px;top:620.92px;font-size:13.5px;line-height:17px;color:#444">19</div>
<div class="cell" style="left:29.5px;top:619.1px;width:237.6px">8bd624b4a0a311edb635080027940ca8</div>
<div class="cell" style="left:270.1px;top:619.1px;width:69.9px">srv-12</div>
<div class="cell" style="left:343.0px;top:619.1px;width:182.2px">anonymous-hash-08c7cf9a1e</div>
<div class="cell" style="left:528.2px;top:619.1px;width:236.1px">6582a351a934f732b7096e3c8ddaf10a</div>
<div class="cell" style="left:767.3px;top:619.1px;width:162.8px">dump-check-example-2-1</div>
<div class="cell" style="left:933.1px;top:619.1px;width:189.7px">anonymous-hash-2e9e104669</div>
<div class="cell" style="left:1125.8px;top:619.1px;width:142.3px">dump-check-example-2</div>
<div class="cell" style="left:1271.1px;top:619.1px;width:214.8px">anonymous-hash-aa36432587</div>
<div class="cell" style="left:1488.9px;top:619.1px;width:22.2px">cust</div>
<div class="ab" style="left:0.00px;top:656.80px;width:1511.60px;height:1.00px;background:#e1e1e1"></div>
<div class="t" style="left:5.99px;top:640.12px;font-size:13.5px;line-height:17px;color:#444">20</div>
<div class="cell" style="left:29.5px;top:638.3px;width:237.6px">2d833e2aeebc488385c10043026ebeda</div>
<div class="cell" style="left:270.1px;top:638.3px;width:69.9px">srv-19</div>
<div class="cell" style="left:343.0px;top:638.3px;width:182.2px">anonymous-hash-5e645d6b77</div>
<div class="cell" style="left:528.2px;top:638.3px;width:236.1px">bb64373c94c329a13609798292c7db56</div>
<div class="cell" style="left:767.3px;top:638.3px;width:162.8px">dump-check-example-2-14</div>
<div class="cell" style="left:933.1px;top:638.3px;width:189.7px">anonymous-hash-19848ce407</div>
<div class="cell" style="left:1125.8px;top:638.3px;width:142.3px">dump-check-example-2</div>
<div class="cell" style="left:1271.1px;top:638.3px;width:214.8px">anonymous-hash-aa36432587</div>
<div class="cell" style="left:1488.9px;top:638.3px;width:22.2px">All</div>
<div class="ab" style="left:0.00px;top:676.00px;width:1511.60px;height:1.00px;background:#e1e1e1"></div>
<div class="t" style="left:5.99px;top:659.32px;font-size:13.5px;line-height:17px;color:#444">21</div>
<div class="cell" style="left:29.5px;top:657.5px;width:237.6px">340f7d2fcaab43ccb394e0fd6d427469</div>
<div class="cell" style="left:270.1px;top:657.5px;width:69.9px">srv-13</div>
<div class="cell" style="left:343.0px;top:657.5px;width:182.2px">anonymous-hash-20686577d2</div>
<div class="cell" style="left:528.2px;top:657.5px;width:236.1px">b4e36da700f3755d237eacd9fbee332e</div>
<div class="cell" style="left:767.3px;top:657.5px;width:162.8px">dump-check-example-2-6</div>
<div class="cell" style="left:933.1px;top:657.5px;width:189.7px">anonymous-hash-8ac2db040f</div>
<div class="cell" style="left:1125.8px;top:657.5px;width:142.3px">dump-check-example-2</div>
<div class="cell" style="left:1271.1px;top:657.5px;width:214.8px">anonymous-hash-aa36432587</div>
<div class="cell" style="left:1488.9px;top:657.5px;width:22.2px">All</div>
<div class="ab" style="left:0.00px;top:695.20px;width:1511.60px;height:1.00px;background:#e1e1e1"></div>
<div class="t" style="left:5.99px;top:678.52px;font-size:13.5px;line-height:17px;color:#444">22</div>
<div class="cell" style="left:29.5px;top:676.7px;width:237.6px">340f7d2fcaab43ccb394e0fd6d427469</div>
<div class="cell" style="left:270.1px;top:676.7px;width:69.9px">srv-13</div>
<div class="cell" style="left:343.0px;top:676.7px;width:182.2px">anonymous-hash-20686577d2</div>
<div class="cell" style="left:528.2px;top:676.7px;width:236.1px">512071c5e2b49849ed7d72ae5f657578</div>
<div class="cell" style="left:767.3px;top:676.7px;width:162.8px">dump-check-example-2-7</div>
<div class="cell" style="left:933.1px;top:676.7px;width:189.7px">anonymous-hash-176d0d8c03</div>
<div class="cell" style="left:1125.8px;top:676.7px;width:142.3px">dump-check-example-2</div>
<div class="cell" style="left:1271.1px;top:676.7px;width:214.8px">anonymous-hash-aa36432587</div>
<div class="cell" style="left:1488.9px;top:676.7px;width:22.2px">All</div>
<div class="ab" style="left:0.00px;top:714.40px;width:1511.60px;height:1.00px;background:#e1e1e1"></div>
<div class="t" style="left:5.99px;top:697.72px;font-size:13.5px;line-height:17px;color:#444">23</div>
<div class="cell" style="left:29.5px;top:695.9px;width:237.6px">8bc7135ca0a311eda148080027940ca8</div>
<div class="cell" style="left:270.1px;top:695.9px;width:69.9px">srv-4</div>
<div class="cell" style="left:343.0px;top:695.9px;width:182.2px">anonymous-hash-954836fc25</div>
<div class="cell" style="left:528.2px;top:695.9px;width:236.1px">424c8690e6ffd9da09f892f383b49de1</div>
<div class="cell" style="left:767.3px;top:695.9px;width:162.8px">dump-check-example-2-15</div>
<div class="cell" style="left:933.1px;top:695.9px;width:189.7px">anonymous-hash-80e21d30ac</div>
<div class="cell" style="left:1125.8px;top:695.9px;width:142.3px">dump-check-example-2</div>
<div class="cell" style="left:1271.1px;top:695.9px;width:214.8px">anonymous-hash-aa36432587</div>
<div class="cell" style="left:1488.9px;top:695.9px;width:22.2px">cust</div>
<div class="ab" style="left:0.00px;top:733.60px;width:1511.60px;height:1.00px;background:#e1e1e1"></div>
<div class="t" style="left:5.99px;top:716.92px;font-size:13.5px;line-height:17px;color:#444">24</div>
<div class="cell" style="left:29.5px;top:715.1px;width:237.6px">1884e097f2a74ee7b82f1a8479852ea1</div>
<div class="cell" style="left:270.1px;top:715.1px;width:69.9px">srv-5</div>
<div class="cell" style="left:343.0px;top:715.1px;width:182.2px">anonymous-hash-44610da532</div>
<div class="cell" style="left:1125.8px;top:715.1px;width:142.3px">check-host-alive</div>
<div class="cell" style="left:1271.1px;top:715.1px;width:214.8px">anonymous-hash-2d6a3ff550</div>
<div class="cell" style="left:1488.9px;top:715.1px;width:22.2px">All</div>
<div class="ab" style="left:0.00px;top:752.80px;width:1511.60px;height:1.00px;background:#e1e1e1"></div>
<div class="t" style="left:5.99px;top:736.12px;font-size:13.5px;line-height:17px;color:#444">25</div>
<div class="cell" style="left:29.5px;top:734.3px;width:237.6px">8bd9ad28a0a311eda85d080027940ca8</div>
<div class="cell" style="left:270.1px;top:734.3px;width:69.9px">srv-14</div>
<div class="cell" style="left:343.0px;top:734.3px;width:182.2px">anonymous-hash-72169f192f</div>
<div class="cell" style="left:528.2px;top:734.3px;width:236.1px">b4e36da700f3755d237eacd9fbee332e</div>
<div class="cell" style="left:767.3px;top:734.3px;width:162.8px">dump-check-example-2-6</div>
<div class="cell" style="left:933.1px;top:734.3px;width:189.7px">anonymous-hash-8ac2db040f</div>
<div class="cell" style="left:1125.8px;top:734.3px;width:142.3px">dump-check-example-2</div>
<div class="cell" style="left:1271.1px;top:734.3px;width:214.8px">anonymous-hash-aa36432587</div>
<div class="cell" style="left:1488.9px;top:734.3px;width:22.2px">cust</div>
<div class="ab" style="left:0.00px;top:772.00px;width:1511.60px;height:1.00px;background:#e1e1e1"></div>
<div class="t" style="left:5.99px;top:755.32px;font-size:13.5px;line-height:17px;color:#444">26</div>
<div class="cell" style="left:29.5px;top:753.5px;width:237.6px">8bd19548a0a311ed8e0f080027940ca8</div>
<div class="cell" style="left:270.1px;top:753.5px;width:69.9px">srv-10</div>
<div class="cell" style="left:343.0px;top:753.5px;width:182.2px">anonymous-hash-a89f7681d1</div>
<div class="cell" style="left:1125.8px;top:753.5px;width:142.3px">check-host-alive</div>
<div class="cell" style="left:1271.1px;top:753.5px;width:214.8px">anonymous-hash-2d6a3ff550</div>
<div class="cell" style="left:1488.9px;top:753.5px;width:22.2px">cust</div>
<div class="ab" style="left:0.00px;top:791.20px;width:1511.60px;height:1.00px;background:#e1e1e1"></div>
<div class="t" style="left:5.99px;top:774.52px;font-size:13.5px;line-height:17px;color:#444">27</div>
<div class="cell" style="left:29.5px;top:772.7px;width:237.6px">8bc339daa0a311eda85d080027940ca8</div>
<div class="cell" style="left:270.1px;top:772.7px;width:69.9px">srv-2</div>
<div class="cell" style="left:343.0px;top:772.7px;width:182.2px">anonymous-hash-6fb60b8226</div>
<div class="cell" style="left:528.2px;top:772.7px;width:236.1px">0f31a3424df44ae41053d5c72dbc7eda</div>
<div class="cell" style="left:767.3px;top:772.7px;width:162.8px">dump-check-example-2-3</div>
<div class="cell" style="left:933.1px;top:772.7px;width:189.7px">anonymous-hash-ab3dec090e</div>
<div class="cell" style="left:1125.8px;top:772.7px;width:142.3px">dump-check-example-2</div>
<div class="cell" style="left:1271.1px;top:772.7px;width:214.8px">anonymous-hash-aa36432587</div>
<div class="cell" style="left:1488.9px;top:772.7px;width:22.2px">cust</div>
<div class="ab" style="left:0.00px;top:810.40px;width:1511.60px;height:1.00px;background:#e1e1e1"></div>
<div class="t" style="left:5.99px;top:793.72px;font-size:13.5px;line-height:17px;color:#444">28</div>
<div class="cell" style="left:29.5px;top:791.9px;width:237.6px">340f7d2fcaab43ccb394e0fd6d427469</div>
<div class="cell" style="left:270.1px;top:791.9px;width:69.9px">srv-13</div>
<div class="cell" style="left:343.0px;top:791.9px;width:182.2px">anonymous-hash-20686577d2</div>
<div class="cell" style="left:528.2px;top:791.9px;width:236.1px">1769d9759e8be6d3680ff5739f431752</div>
<div class="cell" style="left:767.3px;top:791.9px;width:162.8px">dump-check-example-2-12</div>
<div class="cell" style="left:933.1px;top:791.9px;width:189.7px">anonymous-hash-bb4ef5977d</div>
<div class="cell" style="left:1125.8px;top:791.9px;width:142.3px">dump-check-example-2</div>
<div class="cell" style="left:1271.1px;top:791.9px;width:214.8px">anonymous-hash-aa36432587</div>
<div class="cell" style="left:1488.9px;top:791.9px;width:22.2px">All</div>
<div class="ab" style="left:0.00px;top:829.60px;width:1511.60px;height:1.00px;background:#e1e1e1"></div>
<div class="t" style="left:5.99px;top:812.92px;font-size:13.5px;line-height:17px;color:#444">29</div>
<div class="cell" style="left:29.5px;top:811.1px;width:237.6px">340f7d2fcaab43ccb394e0fd6d427469</div>
<div class="cell" style="left:270.1px;top:811.1px;width:69.9px">srv-13</div>
<div class="cell" style="left:343.0px;top:811.1px;width:182.2px">anonymous-hash-20686577d2</div>
<div class="cell" style="left:528.2px;top:811.1px;width:236.1px">424c8690e6ffd9da09f892f383b49de1</div>
<div class="cell" style="left:767.3px;top:811.1px;width:162.8px">dump-check-example-2-15</div>
<div class="cell" style="left:933.1px;top:811.1px;width:189.7px">anonymous-hash-80e21d30ac</div>
<div class="cell" style="left:1125.8px;top:811.1px;width:142.3px">dump-check-example-2</div>
<div class="cell" style="left:1271.1px;top:811.1px;width:214.8px">anonymous-hash-aa36432587</div>
<div class="cell" style="left:1488.9px;top:811.1px;width:22.2px">All</div>
<div class="ab" style="left:0.00px;top:848.80px;width:1511.60px;height:1.00px;background:#e1e1e1"></div>
<div class="t" style="left:5.99px;top:832.12px;font-size:13.5px;line-height:17px;color:#444">30</div>
<div class="cell" style="left:29.5px;top:830.3px;width:237.6px">8be20806a0a311ed9182080027940ca8</div>
<div class="cell" style="left:270.1px;top:830.3px;width:69.9px">srv-18</div>
<div class="cell" style="left:343.0px;top:830.3px;width:182.2px">anonymous-hash-c7cf9a1e80</div>
<div class="cell" style="left:528.2px;top:830.3px;width:236.1px">1769d9759e8be6d3680ff5739f431752</div>
<div class="cell" style="left:767.3px;top:830.3px;width:162.8px">dump-check-example-2-12</div>
<div class="cell" style="left:933.1px;top:830.3px;width:189.7px">anonymous-hash-bb4ef5977d</div>
<div class="cell" style="left:1125.8px;top:830.3px;width:142.3px">dump-check-example-2</div>
<div class="cell" style="left:1271.1px;top:830.3px;width:214.8px">anonymous-hash-aa36432587</div>
<div class="cell" style="left:1488.9px;top:830.3px;width:22.2px">cust</div>
<div class="ab" style="left:0.00px;top:868.00px;width:1511.60px;height:1.00px;background:#e1e1e1"></div>
<div class="t" style="left:5.99px;top:851.32px;font-size:13.5px;line-height:17px;color:#444">31</div>
<div class="cell" style="left:29.5px;top:849.5px;width:237.6px">8bcd91c8a0a311edb99d080027940ca8</div>
<div class="cell" style="left:270.1px;top:849.5px;width:69.9px">srv-8</div>
<div class="cell" style="left:343.0px;top:849.5px;width:182.2px">anonymous-hash-35a25c2308</div>
<div class="cell" style="left:528.2px;top:849.5px;width:236.1px">6582a351a934f732b7096e3c8ddaf10a</div>
<div class="cell" style="left:767.3px;top:849.5px;width:162.8px">dump-check-example-2-8</div>
<div class="cell" style="left:933.1px;top:849.5px;width:189.7px">anonymous-hash-3395da4466</div>
<div class="cell" style="left:1125.8px;top:849.5px;width:142.3px">dump-check-example-2</div>
<div class="cell" style="left:1271.1px;top:849.5px;width:214.8px">anonymous-hash-aa36432587</div>
<div class="cell" style="left:1488.9px;top:849.5px;width:22.2px">cust</div>
<div class="ab" style="left:0.00px;top:887.20px;width:1511.60px;height:1.00px;background:#e1e1e1"></div>
<div class="t" style="left:5.99px;top:870.52px;font-size:13.5px;line-height:17px;color:#444">32</div>
<div class="cell" style="left:29.5px;top:868.7px;width:237.6px">8bdc4e2aa0a311eda148080027940ca8</div>
<div class="cell" style="left:270.1px;top:868.7px;width:69.9px">srv-16</div>
<div class="cell" style="left:343.0px;top:868.7px;width:182.2px">anonymous-hash-bb7dc70c8e</div>
<div class="cell" style="left:528.2px;top:868.7px;width:236.1px">512071c5e2b49849ed7d72ae5f657578</div>
<div class="cell" style="left:767.3px;top:868.7px;width:162.8px">dump-check-example-2-7</div>
<div class="cell" style="left:933.1px;top:868.7px;width:189.7px">anonymous-hash-176d0d8c03</div>
<div class="cell" style="left:1125.8px;top:868.7px;width:142.3px">dump-check-example-2</div>
<div class="cell" style="left:1271.1px;top:868.7px;width:214.8px">anonymous-hash-aa36432587</div>
<div class="cell" style="left:1488.9px;top:868.7px;width:22.2px">cust</div>
<div class="ab" style="left:1511.60px;top:253.00px;width:20.40px;height:629.30px;background:#fff"></div>
<div class="ab" style="left:1511.10px;top:272.50px;width:1.00px;height:609.80px;background:#d8d8d8"></div>
<div class="ab" style="left:1515.00px;top:256.30px;width:14.70px;height:625.70px;background:#f0f0f0"></div>
<div class="ab" style="left:1515.00px;top:256.30px;width:14.70px;height:14.70px;background:#fff;border:1px solid #c6c6c6"></div>
<div class="ab" style="left:1515.00px;top:272.00px;width:14.70px;height:50.30px;background:#fff;border:1px solid #c6c6c6"></div>
<div class="ab" style="left:1515.00px;top:867.50px;width:14.70px;height:14.50px;background:#fff;border:1px solid #e0e0e0"></div>
<svg width="1532" height="927"><path d="M1518.5 266 L1522.3 261.5 L1526 266Z" fill="#777"/><path d="M1518.5 872.5 L1522.3 877 L1526 872.5Z" fill="#777"/></svg>
<div class="ab" style="left:26.6px;top:272.5px;width:1.6px;height:609.8px;background:repeating-linear-gradient(180deg,#217346 0 4px,transparent 4px 6px)"></div>
<div class="ab" style="left:26.6px;top:272.5px;width:1485.0px;height:1.6px;background:repeating-linear-gradient(90deg,#217346 0 4px,transparent 4px 6px);opacity:0.8"></div>
<div class="ab" style="left:26.00px;top:272.50px;width:242.60px;height:20.50px;border:2px solid #217346"></div>
<div class="ab" style="left:265.60px;top:290.50px;width:5.00px;height:5.00px;background:#217346;border:1px solid #fff"></div>
<div class="ab" style="left:0.00px;top:882.30px;width:1532.00px;height:23.70px;background:#f3f3f3"></div>
<div class="ab" style="left:0.00px;top:882.00px;width:1532.00px;height:1.00px;background:#d4d4d4"></div>
<svg width="1532" height="927"><path d="M26.5 890.5 L22.5 894 L26.5 897.5Z" fill="#c6c6c6"/><path d="M45 890.5 L49 894 L45 897.5Z" fill="#c6c6c6"/><circle cx="289.2" cy="894.6" r="7.6" fill="none" stroke="#777" stroke-width="1.1"/><path d="M285 894.6 L293.4 894.6 M289.2 890.4 L289.2 898.8" stroke="#777" stroke-width="1.3"/><circle cx="918" cy="890" r="0.8" fill="#aaa"/><circle cx="918" cy="894" r="0.8" fill="#aaa"/><circle cx="918" cy="898" r="0.8" fill="#aaa"/></svg>
<div class="ab" style="left:82.00px;top:882.00px;width:58.60px;height:21.00px;background:#fff;border:1px solid #d4d4d4;border-top:none"></div>
<div class="ab" style="left:82.00px;top:901.00px;width:58.60px;height:2.00px;background:#217346"></div>
<div class="t" style="left:93.30px;top:882.82px;font-size:13.5px;line-height:17px;color:#217346;letter-spacing:-0.602px;font-weight:bold">Feuil2</div>
<div class="t" style="left:151.70px;top:882.82px;font-size:13.5px;line-height:17px;color:#444;letter-spacing:-0.554px">Feuil4</div>
<div class="ab" style="left:197.00px;top:888.00px;width:1.00px;height:14.00px;background:#c6c6c6"></div>
<div class="t" style="left:208.60px;top:882.82px;font-size:13.5px;line-height:17px;color:#444;letter-spacing:-0.554px">Feuil1</div>
<div class="ab" style="left:254.00px;top:888.00px;width:1.00px;height:14.00px;background:#c6c6c6"></div>
<div class="ab" style="left:931.70px;top:886.60px;width:579.70px;height:15.00px;background:#e6e6e6"></div>
<div class="ab" style="left:931.70px;top:886.60px;width:14.60px;height:15.00px;background:#fff;border:1px solid #c6c6c6"></div>
<div class="ab" style="left:946.30px;top:886.60px;width:403.10px;height:15.00px;background:#fff;border:1px solid #c6c6c6"></div>
<div class="ab" style="left:1497.60px;top:886.60px;width:13.80px;height:15.00px;background:#fff;border:1px solid #c6c6c6"></div>
<svg width="1532" height="927"><path d="M941 890.5 L937 894 L941 897.5Z" fill="#777"/><path d="M1502.5 890.5 L1506.5 894 L1502.5 897.5Z" fill="#777"/></svg>
<div class="ab" style="left:0.00px;top:905.80px;width:1532.00px;height:21.20px;background:#217346"></div>
<div class="t" style="left:6.70px;top:910.53px;font-size:10px;line-height:12px;color:#fff;letter-spacing:-0.575px">POINTER</div>
<svg width="1532" height="927"><g stroke="#e6f0ea" stroke-width="1" fill="none"><rect x="1258.5" y="910.5" width="10.5" height="10.5"/><path d="M1262 910.5 V921 M1265.5 910.5 V921 M1258.5 914 H1269 M1258.5 917.5 H1269"/></g><g stroke="#d7e6dc" stroke-width="1" fill="none"><rect x="1291.5" y="910.5" width="11" height="11"/><rect x="1294.5" y="913.5" width="5" height="5"/></g><g stroke="#e6f0ea" stroke-width="1" fill="none"><rect x="1324.5" y="910.5" width="11" height="11"/></g><rect x="1325" y="911" width="4" height="6" fill="#e6f0ea"/><rect x="1330" y="911" width="3" height="6" fill="#e6f0ea"/><path d="M1350 916.5 H1357" stroke="#14532d" stroke-width="1.5"/><path d="M1361 916.5 H1461" stroke="#cfe0d5" stroke-width="1"/><path d="M1411 913.5 V919.5" stroke="#cfe0d5" stroke-width="1.3"/><path d="M1465 916.5 H1474 M1469.5 912 V921" stroke="#14532d" stroke-width="1.5"/></svg>
<div class="t" style="left:1487.00px;top:909.02px;font-size:11.5px;line-height:14px;color:#9fc7ae;letter-spacing:-1.152px">100 %</div>
<div class="ab" style="left:457.4px;top:345.6px;width:448.6px;height:336.79999999999995px;box-shadow:0 2px 12px 3px rgba(0,0,0,0.22)"></div>
<div class="ab" style="left:457.40px;top:345.60px;width:448.60px;height:336.80px;background:#f0f0f0"></div>
<div class="ab" style="left:457.40px;top:345.60px;width:1.00px;height:336.80px;background:#4a4a4a"></div>
<div class="ab" style="left:457.40px;top:345.60px;width:447.60px;height:30.40px;background:#fff;border:1px solid #4a4a4a;border-bottom:none"></div>
<div class="t" style="left:466.30px;top:352.47px;font-size:12.5px;line-height:16px;color:#000;letter-spacing:-0.361px">Créer un tableau croisé dynamique</div>
<svg width="1532" height="927"><path d="M876 355 L886 365 M886 355 L876 365" stroke="#111" stroke-width="1.1"/></svg>
<div class="t" style="left:833.00px;top:352.67px;font-size:12.5px;line-height:16px;color:#000">?</div>
<div class="t" style="left:465.60px;top:383.96px;font-size:10.5px;line-height:13px;color:#3a3a3a;letter-spacing:-0.165px">Choisissez les données à analyser</div>
<div class="ab" style="left:627.00px;top:389.50px;width:272.00px;height:1.00px;background:#dcdcdc"></div>
<svg width="1532" height="927"><circle cx="482.6" cy="411.8" r="5.8" fill="#fff" stroke="#333" stroke-width="1"/><circle cx="482.6" cy="411.8" r="3.3" fill="#222"/><circle cx="482.6" cy="457" r="5.8" fill="#fff" stroke="#333" stroke-width="1"/><circle cx="482.6" cy="546.2" r="5.8" fill="#fff" stroke="#333" stroke-width="1"/><circle cx="482.6" cy="546.2" r="3.3" fill="#222"/><circle cx="482.6" cy="566.4" r="5.8" fill="#fff" stroke="#333" stroke-width="1"/></svg>
<div class="t" style="left:493.00px;top:406.16px;font-size:10.5px;line-height:13px;color:#000;letter-spacing:-0.014px">Sélectionner un tableau ou une plage</div>
<div class="ab" style="left:493.00px;top:417.80px;width:6.00px;height:0.80px;background:#000"></div>
<div class="t" style="left:513.50px;top:428.16px;font-size:10.5px;line-height:13px;color:#000;letter-spacing:-0.111px">Tableau/Plage :</div>
<div class="ab" style="left:513.50px;top:439.80px;width:5.50px;height:0.80px;background:#000"></div>
<div class="ab" style="left:596.40px;top:424.60px;width:302.60px;height:19.90px;background:#fff;border:1px solid #adadad"></div>
<div class="ab" style="left:600.00px;top:428.00px;width:92.00px;height:13.50px;background:#cccccc"></div>
<div class="t" style="left:601.00px;top:428.16px;font-size:10.5px;line-height:13px;color:#000;letter-spacing:-0.372px">Feuil2!$A$1:$O$356</div>
<div class="ab" style="left:691.50px;top:427.50px;width:1.00px;height:14.50px;background:#000"></div>
<div class="ab" style="left:877.30px;top:425.20px;width:21.10px;height:18.80px;background:#e6e6e6;border:1px solid #c8c8c8"></div>
<svg width="1532" height="927"><rect x="881.0" y="429.0" width="14" height="11" fill="#fff" stroke="#3b6fb6" stroke-width="1"/><path d="M881.0 432.5 H895.0 M881.0 436.0 H895.0 M885.5 429.0 V440.0" stroke="#3b6fb6" stroke-width="0.8"/><path d="M887.5 431.5 L894.5 435.5 L891.5 438.5 L886.5 434.5Z" fill="#e0302a"/></svg>
<div class="t" style="left:493.00px;top:451.36px;font-size:10.5px;line-height:13px;color:#000;letter-spacing:-0.025px">Utiliser une source de données externes</div>
<div class="ab" style="left:493.00px;top:463.00px;width:6.00px;height:0.80px;background:#000"></div>
<div class="ab" style="left:512.90px;top:468.30px;width:121.80px;height:22.20px;background:#cccccc;border:1px solid #bfbfbf"></div>
<div class="t" style="left:525.80px;top:473.06px;font-size:10.5px;line-height:13px;color:#a0a0a0;letter-spacing:-0.332px">Choisir la connexion...</div>
<div class="t" style="left:513.00px;top:495.86px;font-size:10.5px;line-height:13px;color:#6d6d6d;letter-spacing:0.076px">Nom de la connexion :</div>
<div class="t" style="left:465.60px;top:517.36px;font-size:10.5px;line-height:13px;color:#3a3a3a;letter-spacing:0.033px">Choisissez l'emplacement de votre rapport de tableau croisé dynamique</div>
<div class="ab" style="left:808.00px;top:522.80px;width:91.00px;height:1.00px;background:#dcdcdc"></div>
<div class="t" style="left:493.00px;top:540.36px;font-size:10.5px;line-height:13px;color:#000;letter-spacing:0.017px">Nouvelle feuille de calcul</div>
<div class="ab" style="left:493.00px;top:552.00px;width:7.00px;height:0.80px;background:#000"></div>
<div class="t" style="left:493.00px;top:560.66px;font-size:10.5px;line-height:13px;color:#000;letter-spacing:-0.124px">Feuille de calcul existante</div>
<div class="ab" style="left:493.00px;top:572.30px;width:5.00px;height:0.80px;background:#000"></div>
<div class="t" style="left:513.00px;top:581.86px;font-size:10.5px;line-height:13px;color:#000;letter-spacing:-0.086px">Emplacement :</div>
<div class="ab" style="left:538.00px;top:593.50px;width:3.00px;height:0.80px;background:#000"></div>
<div class="ab" style="left:592.20px;top:577.70px;width:306.80px;height:19.90px;background:#f7f7f7;border:1px solid #c3c3c3"></div>
<div class="ab" style="left:877.30px;top:578.20px;width:21.10px;height:18.90px;background:#e6e6e6;border:1px solid #c8c8c8"></div>
<svg width="1532" height="927"><rect x="881.0" y="582.0" width="14" height="11" fill="#fff" stroke="#3b6fb6" stroke-width="1"/><path d="M881.0 585.5 H895.0 M881.0 589.0 H895.0 M885.5 582.0 V593.0" stroke="#3b6fb6" stroke-width="0.8"/><path d="M887.5 584.5 L894.5 588.5 L891.5 591.5 L886.5 587.5Z" fill="#e0302a"/></svg>
<div class="t" style="left:465.60px;top:607.16px;font-size:10.5px;line-height:13px;color:#3a3a3a;letter-spacing:-0.062px">Indiquez si vous souhaitez analyser plusieurs tables</div>
<div class="ab" style="left:709.00px;top:612.80px;width:190.00px;height:1.00px;background:#dcdcdc"></div>
<div class="ab" style="left:476.40px;top:628.80px;width:12.80px;height:12.80px;background:#fff;border:1px solid #333"></div>
<div class="t" style="left:493.00px;top:630.36px;font-size:10.5px;line-height:13px;color:#000;letter-spacing:0.013px">Ajouter ces données au modèle de données</div>
<div class="ab" style="left:608.50px;top:642.00px;width:9.00px;height:0.80px;background:#000"></div>
<div class="ab" style="left:706.90px;top:652.30px;width:89.10px;height:22.50px;background:#e1e1e1;border:2px solid #0078d7"></div>
<div class="t" style="left:743.45px;top:657.19px;font-size:11px;line-height:14px;color:#000">OK</div>
<div class="ab" style="left:807.80px;top:652.30px;width:90.00px;height:22.30px;background:#e1e1e1;border:1px solid #adadad"></div>
<div class="t" style="left:835.30px;top:657.19px;font-size:11px;line-height:14px;color:#000;letter-spacing:-0.486px">Annuler</div>
<svg width="1532" height="927"><path d="M899 681 L905 675 M902.5 681 L905 678.5" stroke="#b0b0b0" stroke-width="1"/></svg>
<svg width="1532" height="927"><circle cx="198.55" cy="42.35" r="14.65" fill="#8b0000"/></svg>
<div class="t" style="left:193.68px;top:31.39px;font-size:17.5px;line-height:22px;color:#fff">1</div>
<svg width="1532" height="927"><circle cx="57.55" cy="103.35" r="14.65" fill="#8b0000"/></svg>
<div class="t" style="left:52.68px;top:92.39px;font-size:17.5px;line-height:22px;color:#fff">2</div>
<svg width="1532" height="927"><circle cx="783.6" cy="666.4" r="14.65" fill="#8b0000"/></svg>
<div class="t" style="left:778.73px;top:655.44px;font-size:17.5px;line-height:22px;color:#fff">3</div>
</body></html>
